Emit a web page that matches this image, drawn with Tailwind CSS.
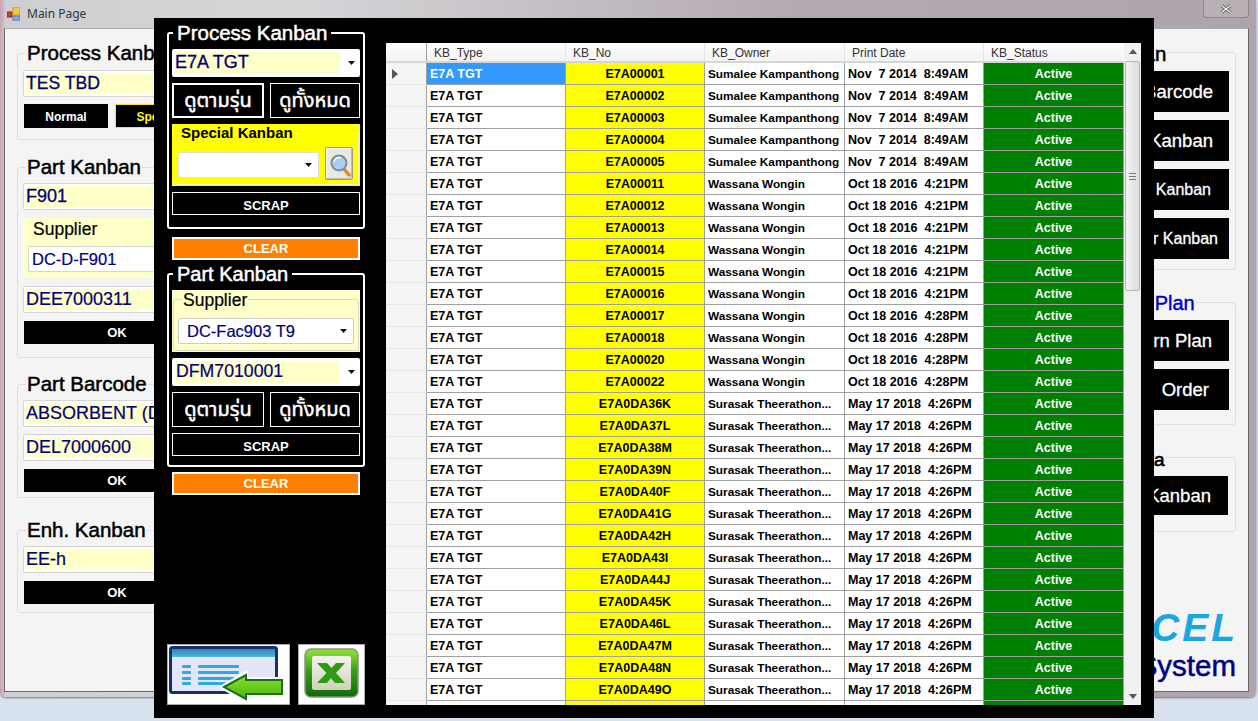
<!DOCTYPE html>
<html lang="en">
<head>
    <meta charset="UTF-8">
    <title>Main Page</title>
    <script src="https://cdn.jsdelivr.net/npm/@tailwindcss/browser@4"></script>
</head>
<body class="w-[1258px] h-[721px] overflow-hidden relative bg-[#d8e2ee] font-['Liberation_Sans',sans-serif]">

    <!-- Main window -->
    <div class="absolute left-0 top-0 w-[1256px] h-[697px] rounded-b-[6px] bg-[linear-gradient(90deg,#c9a0b4_0px,#cfcfd2_6px,#d6d5d8_300px,#b3a9b0_800px,#aea4ab_1258px)] shadow-[0_1px_2px_#777]">
        <!-- Title bar -->
        <div class="h-[28px] relative flex items-center pl-[7px] gap-[7px]">
            <svg width="13" height="14" viewBox="0 0 13 14">
                <rect x="0" y="5" width="5" height="5" fill="#d23c2a" stroke="#8a2a20"/>
                <rect x="6" y="0" width="7" height="8" fill="#f6c93c" stroke="#c69a20"/>
                <rect x="6" y="9" width="7" height="5" fill="#7fa8dc" stroke="#5a80b4"/>
            </svg>
            <span class="text-[12px] text-[#333] font-['Noto_Sans',sans-serif]">Main Page</span>
            <div class="absolute left-[1203px] top-0 w-[46px] h-[18px] border border-t-0 border-[#8d858b] rounded-b-[4px] flex items-center justify-center bg-[#c4bcc2]/50">
                <svg width="12" height="10" viewBox="0 0 12 10">
                    <path d="M1.5 1.5 L10.5 8.5 M10.5 1.5 L1.5 8.5" stroke="#5f5a60" stroke-width="3"/>
                    <path d="M1.5 1.5 L10.5 8.5 M10.5 1.5 L1.5 8.5" stroke="#f2f2f2" stroke-width="1.5"/>
                </svg>
            </div>
        </div>

        <!-- Client area -->
        <div class="ml-[4px] w-[1245px] h-[664px] bg-[#f4f4f4] border border-[#666] border-t-[#aaa] flex justify-between pl-[12px] pr-[12px]">
            <!-- Left column, mostly covered by the dialog -->
            <div class="w-[210px] pt-[12px] flex flex-col">
                <fieldset class="h-[99px] border border-[#dcdfe3] rounded-[3px] px-[5px]">
                    <legend class="ml-[3px] px-[1px] h-[24px] leading-[24px] text-[20.5px] text-black [-webkit-text-stroke:0.5px_black]">Process Kanban</legend>
                    <div class="mt-[5px] h-[27px] bg-white border border-[#d5d5d5] rounded-[2px] p-[2px]">
                        <div class="h-full bg-[#ffffc8] leading-[21px] text-[17.6px] text-[#000080] [-webkit-text-stroke:0.3px_#000080]">TES TBD</div>
                    </div>
                    <div class="mt-[7px] ml-[1px] flex gap-[7px]">
                        <div class="w-[84px] h-[24px] pt-[1px] bg-black text-white text-[12px] font-bold flex items-center justify-center">Normal</div>
                        <div class="w-[85px] h-[24px] pt-[1px] bg-black border border-yellow-300 text-[#ffff00] text-[12px] font-bold flex items-center justify-center">Special</div>
                    </div>
                </fieldset>

                <fieldset class="mt-[15px] h-[203px] border border-[#dcdfe3] rounded-[3px] px-[5px]">
                    <legend class="ml-[3px] px-[1px] h-[24px] leading-[24px] text-[20.5px] text-black [-webkit-text-stroke:0.5px_black]">Part Kanban</legend>
                    <div class="mt-[4px] h-[27px] bg-white border border-[#d5d5d5] rounded-[2px] p-[2px]">
                        <div class="h-full bg-[#ffffc8] leading-[21px] text-[18px] text-[#000080] [-webkit-text-stroke:0.3px_#000080]">F901</div>
                    </div>
                    <div class="mt-[8px] h-[60px] bg-[#ffffc8] px-[5px]">
                        <div class="h-[20px] pl-[5px] pt-[1px] leading-[20px] text-[17.5px] text-black [-webkit-text-stroke:0.2px_black]">Supplier</div>
                        <div class="mt-[8px] h-[26px] bg-white border border-[#d5d5d5] rounded-[2px] pl-[3px] leading-[24px] text-[16.5px] text-[#000080] [-webkit-text-stroke:0.2px_#000080]">DC-D-F901</div>
                    </div>
                    <div class="mt-[8px] h-[27px] bg-white border border-[#d5d5d5] rounded-[2px] p-[2px]">
                        <div class="h-full bg-[#ffffc8] leading-[21px] text-[18px] text-[#000080] [-webkit-text-stroke:0.2px_#000080]">DEE7000311</div>
                    </div>
                    <div class="mt-[8px] ml-[1px] pt-[1px] h-[23px] bg-black text-white text-[13px] font-bold flex items-center justify-center w-[186px]">OK</div>
                </fieldset>

                <fieldset class="mt-[14px] h-[126px] border border-[#dcdfe3] rounded-[3px] px-[5px]">
                    <legend class="ml-[3px] px-[1px] h-[24px] leading-[24px] text-[20.5px] text-black [-webkit-text-stroke:0.5px_black]">Part Barcode</legend>
                    <div class="mt-[4px] h-[27px] bg-white border border-[#d5d5d5] rounded-[2px] p-[2px]">
                        <div class="h-full bg-[#ffffc8] leading-[21px] text-[18px] text-[#000080] whitespace-nowrap overflow-hidden [-webkit-text-stroke:0.2px_#000080]">ABSORBENT (D</div>
                    </div>
                    <div class="mt-[7px] h-[27px] bg-white border border-[#d5d5d5] rounded-[2px] p-[2px]">
                        <div class="h-full bg-[#ffffc8] leading-[21px] text-[18px] text-[#000080] [-webkit-text-stroke:0.2px_#000080]">DEL7000600</div>
                    </div>
                    <div class="mt-[8px] ml-[1px] pt-[1px] h-[23px] bg-black text-white text-[13px] font-bold flex items-center justify-center w-[186px]">OK</div>
                </fieldset>

                <fieldset class="mt-[20px] h-[95px] border border-[#dcdfe3] rounded-[3px] px-[5px]">
                    <legend class="ml-[3px] px-[1px] h-[24px] leading-[24px] text-[20.5px] text-black [-webkit-text-stroke:0.5px_black]">Enh. Kanban</legend>
                    <div class="mt-[4px] h-[27px] bg-white border border-[#d5d5d5] rounded-[2px] p-[2px]">
                        <div class="h-full bg-[#ffffc8] leading-[21px] text-[18px] text-[#000080] [-webkit-text-stroke:0.2px_#000080]">EE-h</div>
                    </div>
                    <div class="mt-[8px] ml-[1px] pt-[1px] h-[23px] bg-black text-white text-[13px] font-bold flex items-center justify-center w-[186px]">OK</div>
                </fieldset>
            </div>

            <!-- Right column, mostly covered by the dialog -->
            <div class="w-[200px] pt-[11px] flex flex-col text-white text-[18.5px]">
                <fieldset class="h-[230px] border border-[#dcdfe3] rounded-[3px] pl-[6px] pr-[6px]">
                    <legend class="ml-[5px] px-[1px] h-[24px] leading-[28px] text-[20.5px] text-black [-webkit-text-stroke:0.5px_black] whitespace-nowrap">New Kanban</legend>
                    <div class="mt-[7px] flex flex-col gap-[8px] [-webkit-text-stroke:0.3px_white]">
                        <div class="h-[41px] pt-[1px] bg-black flex items-center justify-end pr-[16px]">Barcode</div>
                        <div class="h-[41px] pt-[1px] bg-black flex items-center justify-end pr-[16px]">Kanban</div>
                        <div class="h-[41px] pt-[1px] bg-black flex items-center justify-end pr-[18px] text-[16px]">Kanban</div>
                        <div class="h-[41px] pt-[1px] bg-black flex items-center justify-end pr-[11px] text-[16px]">Order Kanban</div>
                    </div>
                </fieldset>
                <fieldset class="mt-[20px] h-[135px] border border-[#dcdfe3] rounded-[3px] pl-[6px] pr-[6px]">
                    <legend class="ml-[54px] px-[1px] h-[24px] leading-[26px] text-[20px] text-[#0000cd] [-webkit-text-stroke:0.4px_#0000cd] whitespace-nowrap">Order Plan</legend>
                    <div class="mt-[6px] flex flex-col gap-[8px] [-webkit-text-stroke:0.3px_white]">
                        <div class="h-[41px] bg-black flex items-center justify-end pr-[17px]">Pattern Plan</div>
                        <div class="h-[41px] bg-black flex items-center justify-end pr-[20px] whitespace-pre">Tag  Order</div>
                    </div>
                </fieldset>
                <fieldset class="mt-[20px] h-[87px] border border-[#dcdfe3] rounded-[3px] pl-[6px] pr-[7px]">
                    <legend class="ml-[34px] px-[1px] h-[24px] leading-[29px] text-[19px] text-black [-webkit-text-stroke:0.6px_black] whitespace-nowrap">Main Data</legend>
                    <div class="mt-[7px] h-[39px] bg-black flex items-center justify-end pr-[17px] [-webkit-text-stroke:0.3px_white]">Kanban</div>
                </fieldset>
                <div class="mt-[77px] -mr-[2px] text-right italic font-bold text-[39px] tracking-[3px] leading-[38px] text-[#1aa6e0] whitespace-nowrap">CEL</div>
                <div class="mt-[4px] text-right text-[29.5px] leading-[30px] text-[#000080] [-webkit-text-stroke:0.5px_#000080] whitespace-nowrap">System</div>
            </div>
        </div>
    </div>

    <!-- Kanban list dialog -->
    <div class="absolute left-[154px] top-[18px] w-[1000px] h-[700px] bg-black flex pl-[13px] pr-[13px] pt-[3px] pb-[13px] gap-[21px]">
        <div class="w-[198px] flex flex-col">
            <fieldset class="border-2 border-white rounded-[3px] px-[3px] pb-[12px]">
                <legend class="ml-[1px] px-[4px] h-[24px] leading-[24px] text-[20.5px] text-white [-webkit-text-stroke:0.5px_white] whitespace-nowrap">Process Kanban</legend>
                <div class="mt-[4px] h-[28px] bg-white rounded-[2px] p-[3px] flex items-center">
                    <div class="w-[165px] h-[22px] bg-[#ffffc8] leading-[21px] text-[18px] text-[#000080] [-webkit-text-stroke:0.3px_#000080]">E7A TGT</div>
                    <svg class="ml-[8px]" width="8" height="4" viewBox="0 0 8 4"><path d="M0 0 H7 L3.5 4 Z" fill="#111"/></svg>
                </div>
                <div class="mt-[6px] flex gap-[6px]">
                    <div class="w-[92px] h-[35px] border-2 border-white flex items-center justify-center text-white text-[20px] [-webkit-text-stroke:0.5px_white] font-['Noto_Sans_Thai','DejaVu_Sans',sans-serif]">ดูตามรุ่น</div>
                    <div class="w-[90px] h-[35px] border border-white flex items-center justify-center text-white text-[20px] [-webkit-text-stroke:0.5px_white] font-['Noto_Sans_Thai','DejaVu_Sans',sans-serif]">ดูทั้งหมด</div>
                </div>
                <div class="mt-[6px] h-[62px] bg-[#ffff00] relative px-[6px]">
                    <div class="absolute left-[1px] right-[1px] top-[9px] bottom-[1px] border border-[#f4f4c0] rounded-[2px]"></div>
                    <div class="relative ml-[2px] w-fit bg-[#ffff00] px-[1px] h-[18px] leading-[18px] text-[15px] font-bold text-black">Special Kanban</div>
                    <div class="relative mt-[10px] flex items-start">
                        <div class="w-[141px] h-[26px] bg-white border border-[#ddd] rounded-[2px] flex items-center justify-end pr-[5px]">
                            <svg width="8" height="4" viewBox="0 0 8 4"><path d="M0 0 H7 L3.5 4 Z" fill="#111"/></svg>
                        </div>
                        <div class="ml-[6px] -mt-[5px] w-[28px] h-[33px] bg-[#e9e9e2] border border-[#999] rounded-[2px] shadow-[inset_-1px_-1px_0_#bbb,inset_1px_1px_0_#fff] flex items-center justify-center">
                            <svg width="24" height="27" viewBox="0 0 24 27">
                                <path d="M17 19 L22 25" stroke="#e8861e" stroke-width="3.5" stroke-linecap="round"/>
                                <circle cx="12" cy="13" r="7.5" fill="#a9cdf2" stroke="#7f8c99" stroke-width="2"/>
                                <path d="M7 12 A5 5 0 0 1 14 8" stroke="#fff" stroke-width="1.5" fill="none"/>
                            </svg>
                        </div>
                    </div>
                </div>
                <div class="mt-[6px] h-[23px] pt-[4px] border border-white flex items-center justify-center text-white text-[13px] font-bold">SCRAP</div>
            </fieldset>
            <div class="ml-[5px] w-[188px] mt-[8px] h-[23px] bg-[#ff7f00] border-2 border-white flex items-center justify-center text-white text-[13px] font-bold">CLEAR</div>

            <fieldset class="mt-[2px] border-2 border-white rounded-[3px] px-[3px] pb-[9px]">
                <legend class="ml-[1px] px-[4px] h-[24px] leading-[24px] text-[20px] text-white [-webkit-text-stroke:0.5px_white] whitespace-nowrap">Part Kanban</legend>
                <div class="mt-[4px] h-[62px] bg-[#ffffc8] relative px-[6px]">
                    <div class="absolute left-[1px] right-[1px] top-[9px] bottom-[1px] border border-[#dcdcc0] rounded-[2px]"></div>
                    <div class="relative ml-[4px] w-fit bg-[#ffffc8] px-[1px] h-[20px] leading-[20px] text-[17.5px] text-black [-webkit-text-stroke:0.2px_black]">Supplier</div>
                    <div class="relative mt-[8px] h-[26px] bg-white border border-[#ccc] rounded-[2px] flex items-center pl-[8px] pr-[5px] justify-between text-[16.5px] text-[#000080] [-webkit-text-stroke:0.2px_#000080]">
                        <span>DC-Fac903 T9</span>
                        <svg width="8" height="4" viewBox="0 0 8 4"><path d="M0 0 H7 L3.5 4 Z" fill="#111"/></svg>
                    </div>
                </div>
                <div class="mt-[6px] h-[28px] bg-white rounded-[2px] p-[3px] flex items-center">
                    <div class="w-[165px] h-[22px] bg-[#ffffc8] pl-[1px] leading-[21px] text-[17.7px] text-[#000080] [-webkit-text-stroke:0.2px_#000080]">DFM7010001</div>
                    <svg class="ml-[8px]" width="8" height="4" viewBox="0 0 8 4"><path d="M0 0 H7 L3.5 4 Z" fill="#111"/></svg>
                </div>
                <div class="mt-[6px] flex gap-[6px]">
                    <div class="w-[92px] h-[35px] border border-white flex items-center justify-center text-white text-[20px] [-webkit-text-stroke:0.5px_white] font-['Noto_Sans_Thai','DejaVu_Sans',sans-serif]">ดูตามรุ่น</div>
                    <div class="w-[90px] h-[35px] border border-white flex items-center justify-center text-white text-[20px] [-webkit-text-stroke:0.5px_white] font-['Noto_Sans_Thai','DejaVu_Sans',sans-serif]">ดูทั้งหมด</div>
                </div>
                <div class="mt-[6px] h-[23px] pt-[4px] border border-white flex items-center justify-center text-white text-[13px] font-bold">SCRAP</div>
            </fieldset>
            <div class="ml-[5px] w-[188px] mt-[5px] h-[23px] bg-[#ff7f00] border-2 border-white flex items-center justify-center text-white text-[13px] font-bold">CLEAR</div>

            <div class="mt-auto flex gap-[8px]">
                <div class="w-[123px] h-[61px] bg-white border border-[#a8a8a8]">
                    <svg width="121" height="59" viewBox="0 0 121 59">
                        <defs>
                            <linearGradient id="listBar" x1="0" y1="0" x2="0" y2="1">
                                <stop offset="0" stop-color="#2f86bd"/>
                                <stop offset="1" stop-color="#55b4dc"/>
                            </linearGradient>
                            <linearGradient id="arrowGreen" x1="0" y1="0" x2="0" y2="1">
                                <stop offset="0" stop-color="#86e428"/>
                                <stop offset="1" stop-color="#4fb414"/>
                            </linearGradient>
                        </defs>
                        <rect x="2.5" y="2.5" width="106" height="45" rx="2" fill="#e4e6f6" stroke="#16306e" stroke-width="3"/>
                        <rect x="4" y="4" width="103" height="8" fill="url(#listBar)"/>
                        <g fill="#2eaadf">
                            <rect x="14" y="20" width="9" height="3" rx="1"/><rect x="14" y="26" width="9" height="3" rx="1"/><rect x="14" y="32" width="9" height="3" rx="1"/><rect x="14" y="37" width="9" height="3" rx="1"/>
                            <rect x="30" y="20" width="41" height="3" rx="1"/><rect x="30" y="26" width="41" height="3" rx="1"/><rect x="30" y="32" width="41" height="3" rx="1"/><rect x="30" y="37" width="41" height="3" rx="1"/>
                        </g>
                        <path d="M54 42 L78 28 V34 H114 V48 H78 V56 Z" fill="#fff" stroke="#fff" stroke-width="4" stroke-linejoin="round"/>
                        <path d="M56 42 L78 30 V35 H114 V49 H78 V54 Z" fill="url(#arrowGreen)" stroke="#16701c" stroke-width="2"/>
                    </svg>
                </div>
                <div class="w-[67px] h-[61px] bg-white border border-[#a8a8a8]">
                    <svg width="65" height="59" viewBox="0 0 65 59">
                        <defs>
                            <linearGradient id="xlGreen" x1="0" y1="0" x2="0" y2="1">
                                <stop offset="0" stop-color="#96e23c"/>
                                <stop offset="0.45" stop-color="#35a014"/>
                                <stop offset="1" stop-color="#0f6a08"/>
                            </linearGradient>
                            <linearGradient id="xlPanel" x1="0" y1="0" x2="0" y2="1">
                                <stop offset="0" stop-color="#f2f5ee"/>
                                <stop offset="1" stop-color="#cfd0b8"/>
                            </linearGradient>
                        </defs>
                        <rect x="6" y="4" width="53" height="48" rx="6" fill="url(#xlGreen)" stroke="#8f8f8f" stroke-width="1.5"/>
                        <rect x="13" y="11" width="39" height="34" rx="2" fill="url(#xlPanel)"/>
                        <path d="M18 18 H28 L32.5 23 L37 18 H46 L37 28 L46 38 H36 L32 33 L28 38 H18 L27.5 28 Z" fill="#2f9a14"/>
                    </svg>
                </div>
            </div>
        </div>

        <!-- Grid -->
        <div class="w-[755px] mt-[22px] h-[662px] bg-white flex overflow-hidden">
            <div class="w-[738px] flex flex-col">
                <div class="h-[20px] shrink-0 flex bg-[linear-gradient(#fdfdfd,#f3f3f3)] border-b-2 border-[#d6d6d6] text-[12px] leading-[20px] text-[#333]">
                    <div class="w-[41px] border-r border-[#a0a0a0]"></div>
                    <div class="w-[139px] pl-[7px] border-r border-[#e4e4e4]">KB_Type</div>
                    <div class="w-[139px] pl-[7px] border-r border-[#e4e4e4]">KB_No</div>
                    <div class="w-[140px] pl-[7px] border-r border-[#e4e4e4]">KB_Owner</div>
                    <div class="w-[139px] pl-[7px] border-r border-[#e4e4e4]">Print Date</div>
                    <div class="w-[140px] pl-[7px]">KB_Status</div>
                </div>
                <div id="rows"></div>
            </div>
            <!-- Scrollbar -->
            <div class="w-[17px] bg-[#f0f0f0] flex flex-col items-center relative">
                <svg class="mt-[6px]" width="8" height="5" viewBox="0 0 8 5"><path d="M4 0 L8 5 H0 Z" fill="#555"/></svg>
                <div class="absolute left-[1px] top-[18px] w-[15px] h-[230px] rounded-[2px] border border-[#b5b5b5] bg-[linear-gradient(90deg,#f4f4f4,#dcdcdc)] flex items-center justify-center">
                    <div class="w-[7px] h-[7px] border-y border-[#777] relative"><div class="absolute left-0 right-0 top-[2px] h-px bg-[#777]"></div></div>
                </div>
                <svg class="absolute bottom-[6px]" width="8" height="5" viewBox="0 0 8 5"><path d="M0 0 H8 L4 5 Z" fill="#555"/></svg>
            </div>
        </div>
    </div>

    <script>
        const sumalee = 'Sumalee Kampanthong';
        const wassana = 'Wassana Wongin';
        const surasak = 'Surasak Theerathon...';
        const rows = [];
        ['00001', '00002', '00003', '00004', '00005'].forEach(n => rows.push(['E7A' + n, sumalee, 'Nov  7 2014  8:49AM']));
        ['00011', '00012', '00013', '00014', '00015', '00016'].forEach(n => rows.push(['E7A' + n, wassana, 'Oct 18 2016  4:21PM']));
        ['00017', '00018', '00020', '00022'].forEach(n => rows.push(['E7A' + n, wassana, 'Oct 18 2016  4:28PM']));
        ['36K', '37L', '38M', '39N', '40F', '41G', '42H', '43I', '44J', '45K', '46L', '47M', '48N', '49O'].forEach(n => rows.push(['E7A0DA' + n, surasak, 'May 17 2018  4:26PM']));

        const pointer = '<svg width="6" height="10" viewBox="0 0 6 10"><path d="M0 0 L6 5 L0 10 Z" fill="#555"/></svg>';
        const rowHtml = rows.map((r, i) => `
            <div class="h-[22px] flex text-[12.5px] font-bold text-black leading-[23px] whitespace-pre">
                <div class="w-[41px] bg-[#f4f4f4] border-r border-b border-r-[#a0a0a0] border-b-[#e6e6e6] pl-[6px] flex items-center">${i === 0 ? pointer : ''}</div>
                <div class="w-[139px] pl-[3px] border-r border-b border-[#a0a0a0] ${i === 0 ? 'bg-[#3399ff] text-white' : 'bg-white'}">E7A TGT</div>
                <div class="w-[139px] text-center bg-[#ffff00] border-r border-b border-[#a0a0a0]">${r[0]}</div>
                <div class="w-[140px] pl-[3px] bg-white border-r border-b border-[#a0a0a0] text-[11.8px]">${r[1]}</div>
                <div class="w-[139px] pl-[3px] bg-white border-r border-b border-[#a0a0a0]">${r[2]}</div>
                <div class="w-[140px] text-center bg-[#008000] text-white border-b border-r border-[#a0a0a0]">Active</div>
            </div>`).join('');
        // next row is scrolled almost out of view, only its cell colours show
        const partialRow = `
            <div class="h-[5px] flex">
                <div class="w-[41px] bg-[#f4f4f4] border-r border-[#a0a0a0]"></div>
                <div class="w-[139px] bg-white border-r border-[#a0a0a0]"></div>
                <div class="w-[139px] bg-[#ffff00] border-r border-[#a0a0a0]"></div>
                <div class="w-[140px] bg-white border-r border-[#a0a0a0]"></div>
                <div class="w-[139px] bg-white border-r border-[#a0a0a0]"></div>
                <div class="w-[140px] bg-[#008000] border-r border-[#a0a0a0]"></div>
            </div>`;
        document.getElementById('rows').innerHTML = rowHtml + partialRow;
    </script>
</body>
</html>
